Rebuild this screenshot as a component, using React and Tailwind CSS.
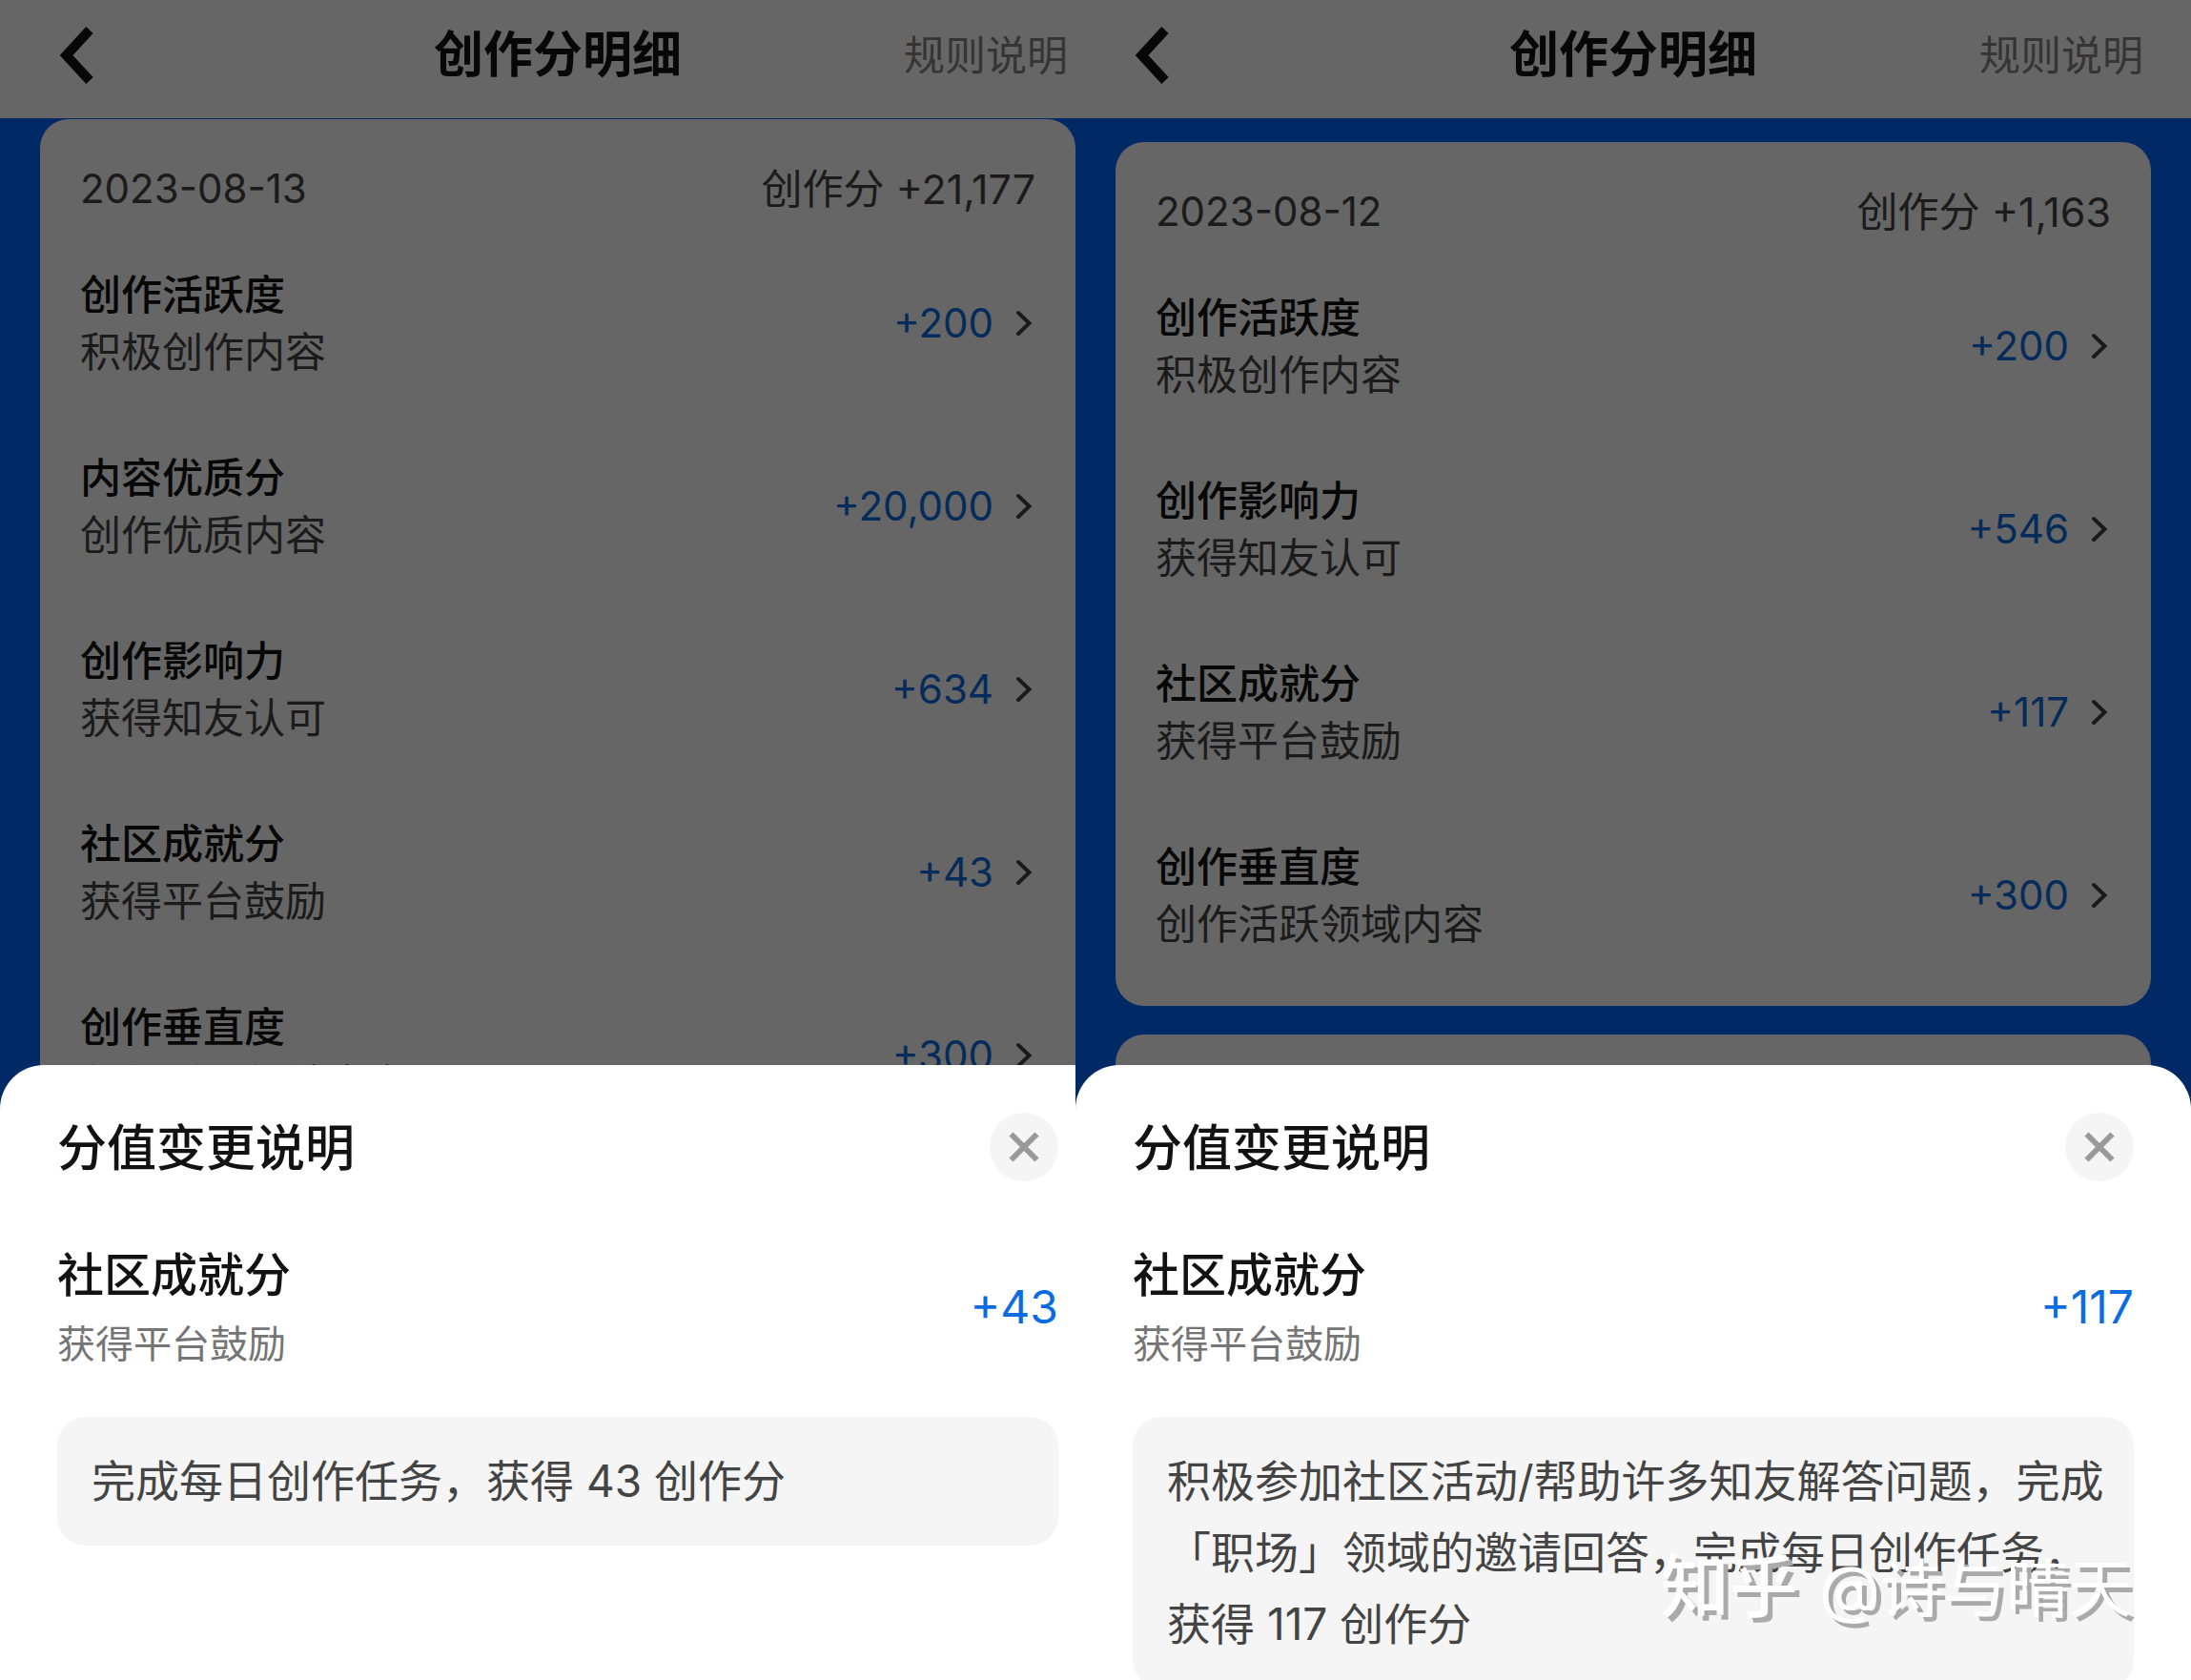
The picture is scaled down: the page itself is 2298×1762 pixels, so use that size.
const screens = [
  {
    date: '2023-08-13',
    total: '+21,177',
    listClass: 'pt-px',
    items: [
      { title: '创作活跃度', desc: '积极创作内容', value: '+200' },
      { title: '内容优质分', desc: '创作优质内容', value: '+20,000' },
      { title: '创作影响力', desc: '获得知友认可', value: '+634' },
      { title: '社区成就分', desc: '获得平台鼓励', value: '+43' },
      { title: '创作垂直度', desc: '创作活跃领域内容', value: '+300' },
    ],
    detail: {
      title: '社区成就分',
      desc: '获得平台鼓励',
      value: '+43',
      text: '完成每日创作任务，获得 43 创作分',
    },
  },
  {
    date: '2023-08-12',
    total: '+1,163',
    listClass: 'pt-[25px]',
    items: [
      { title: '创作活跃度', desc: '积极创作内容', value: '+200' },
      { title: '创作影响力', desc: '获得知友认可', value: '+546' },
      { title: '社区成就分', desc: '获得平台鼓励', value: '+117' },
      { title: '创作垂直度', desc: '创作活跃领域内容', value: '+300' },
    ],
    detail: {
      title: '社区成就分',
      desc: '获得平台鼓励',
      value: '+117',
      text: '积极参加社区活动/帮助许多知友解答问题，完成「职场」领域的邀请回答，完成每日创作任务，获得 117 创作分',
    },
  },
];

function NavBar() {
  return (
    <header className="grid h-[124px] shrink-0 grid-cols-[1fr_auto_1fr] items-center bg-white px-[50px] pb-2">
      <button type="button" aria-label="返回" className="justify-self-start pl-3">
        <svg width="36" height="60" viewBox="0 0 36 60" fill="none" stroke="#121212" strokeWidth="10">
          <path d="M32 3.5 7.5 30 32 56.5" />
        </svg>
      </button>
      <h1 className="text-[52px] leading-[72px] font-bold text-[#121212]">创作分明细</h1>
      <a href="#rules" className="justify-self-end text-[43px] leading-[60px] text-[#858585]">
        规则说明
      </a>
    </header>
  );
}

function ScoreRow({ item }) {
  return (
    <li>
      <button type="button" className="flex h-[192px] w-full items-center text-left">
        <span className="flex-1 text-[43px] leading-[60px]">
          <span className="block font-medium text-[#121212]">{item.title}</span>
          <span className="block text-[#444444]">{item.desc}</span>
        </span>
        <span className="text-[42px] leading-[60px] text-[#0b6ce2]">{item.value}</span>
        <svg
          className="ml-[22px]"
          width="22"
          height="28"
          viewBox="0 0 22 28"
          fill="none"
          stroke="#444444"
          strokeWidth="4"
          strokeLinecap="round"
        >
          <path d="M4 3 15.5 14 4 25" />
        </svg>
      </button>
    </li>
  );
}

function ScoreCard({ date, total, items }) {
  return (
    <section className="rounded-[30px] bg-white px-[42px] pb-5">
      <div className="flex h-[118px] items-center justify-between pt-7 leading-[60px] text-[#444444]">
        <time className="text-[42px]">{date}</time>
        <span className="text-[43px]">创作分 {total}</span>
      </div>
      <ul>
        {items.map((item) => (
          <ScoreRow key={item.title} item={item} />
        ))}
      </ul>
    </section>
  );
}

function DetailSheet({ detail }) {
  return (
    <div
      role="dialog"
      aria-label="分值变更说明"
      className="absolute inset-x-0 bottom-0 h-[645px] overflow-hidden rounded-t-[46px] bg-white px-[60px] pt-12"
    >
      <div className="flex items-center justify-between">
        <h2 className="pt-1 text-[52px] leading-[72px] font-medium text-[#121212]">分值变更说明</h2>
        <button
          type="button"
          aria-label="关闭"
          className="flex size-[72px] items-center justify-center rounded-full bg-[#f5f5f5]"
        >
          <svg width="32" height="32" viewBox="0 0 32 32" fill="none" stroke="#999999" strokeWidth="6">
            <path d="M2.5 2.5l27 27M29.5 2.5l-27 27" />
          </svg>
        </button>
      </div>
      <div className="mt-[61px] flex items-center justify-between">
        <div className="leading-[72px]">
          <h3 className="text-[49px] font-medium text-[#121212]">{detail.title}</h3>
          <p className="text-[40px] text-[#757575]">{detail.desc}</p>
        </div>
        <span className="pb-1.5 text-[48px] leading-[72px] text-[#0b6ce2]">{detail.value}</span>
      </div>
      <p className="mt-10 rounded-[30px] bg-[#f5f5f5] py-[30px] pr-6 pl-9 text-[46px] leading-[75px] text-[#444444]">
        {detail.text}
      </p>
    </div>
  );
}

function Screen({ screen, last }) {
  return (
    <div
      className={`relative flex h-screen w-[calc(50%+21px)] shrink-0 flex-col overflow-hidden bg-[#0066ff] ${
        last ? '-ml-[42px]' : ''
      }`}
    >
      <NavBar />
      <main className={`flex flex-col gap-[30px] px-[42px] ${screen.listClass}`}>
        <ScoreCard date={screen.date} total={screen.total} items={screen.items} />
        <div className="h-[300px] shrink-0 rounded-[30px] bg-white" />
      </main>
      <div className="absolute inset-0 bg-black/60" />
      <DetailSheet detail={screen.detail} />
    </div>
  );
}

export default function App() {
  return (
    <div className="relative flex h-screen overflow-hidden font-['Inter','Noto_Sans_CJK_SC',sans-serif]">
      {screens.map((screen, i) => (
        <Screen key={screen.date} screen={screen} last={i === screens.length - 1} />
      ))}
      <span className="absolute right-[62px] bottom-[48px] text-[66px] leading-[96px] whitespace-nowrap text-white [text-shadow:5px_5px_0_#aaaaaa]">
        <span className="mr-1 text-[72px] font-medium">知乎</span> @诗与晴天
      </span>
    </div>
  );
}
